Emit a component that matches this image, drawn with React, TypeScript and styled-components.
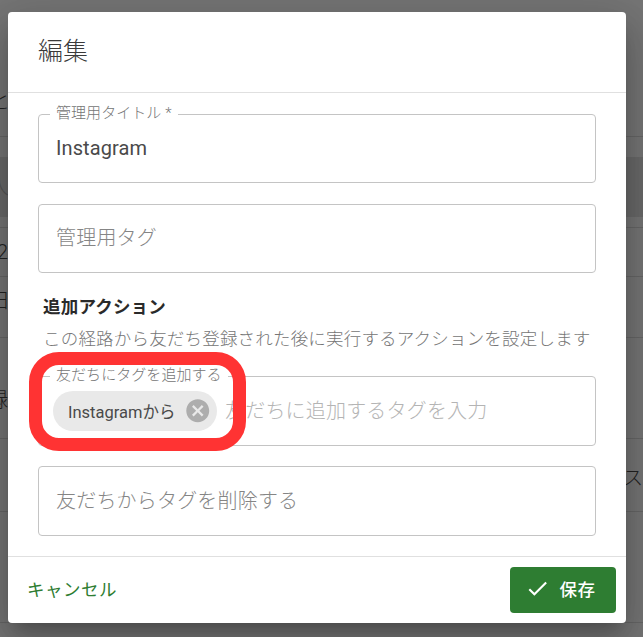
import styled, { createGlobalStyle } from 'styled-components';

const fontStack = `Roboto, "Noto Sans CJK JP", sans-serif`;

const GlobalStyle = createGlobalStyle`
  html, body {
    margin: 0;
    padding: 0;
    background: #757575;
  }
  body {
    font-family: ${fontStack};
    overflow: hidden;
  }
`;

const Page = styled.div`
  position: relative;
  width: 643px;
  height: 637px;
  overflow: hidden;
  background: #757575;
`;

const Backdrop = styled.div`
  display: flex;
  flex-direction: column;
  padding-top: 88px;
`;

const BackdropRow = styled.div<{ $h: number; $dark?: boolean; $noLine?: boolean }>`
  height: ${(p) => p.$h}px;
  box-sizing: border-box;
  border-bottom: ${(p) => (p.$noLine ? 'none' : '1px solid #666')};
  background: ${(p) => (p.$dark ? '#696969' : 'transparent')};
  display: flex;
  justify-content: space-between;
  align-items: center;
  font-size: 20px;
  color: #222;
`;

const BackdropText = styled.span<{ $shift?: number; $dy?: number; $faded?: boolean }>`
  margin-left: ${(p) => p.$shift ?? 0}px;
  margin-top: ${(p) => (p.$dy ?? 0) * 2}px;
  color: ${(p) => (p.$faded ? '#555' : '#222')};
  font-weight: 300;
`;

const Dialog = styled.div`
  position: absolute;
  left: 8px;
  top: 12px;
  width: 618px;
  height: 611px;
  background: #fff;
  border-radius: 4px;
  display: flex;
  flex-direction: column;
  box-shadow: 0 11px 15px -7px rgba(0, 0, 0, 0.2), 0 24px 38px 3px rgba(0, 0, 0, 0.14), 0 9px 46px 8px rgba(0, 0, 0, 0.12);
`;

const Title = styled.h2`
  margin: 0;
  height: 81px;
  box-sizing: border-box;
  padding: 24px 30px 0;
  font-size: 25px;
  line-height: 32px;
  font-weight: 300;
  color: #3a3a3a;
  border-bottom: 1px solid #e0e0e0;
  flex: none;
`;

const Body = styled.div`
  flex: 1;
  padding: 21px 30px 0;
  display: flex;
  flex-direction: column;
`;

const Field = styled.div<{ $h?: number; $mb?: number }>`
  position: relative;
  box-sizing: border-box;
  height: ${(p) => p.$h ?? 69}px;
  margin-bottom: ${(p) => p.$mb ?? 21}px;
  border: 1px solid #c4c4c4;
  border-radius: 4px;
  display: flex;
  align-items: center;
  padding: 0 17px;
  font-size: 20px;
  letter-spacing: 0.19px;
`;

const FloatLabel = styled.span`
  position: absolute;
  left: 11px;
  top: -11px;
  padding: 0 6px;
  background: #fff;
  font-size: 15px;
  line-height: 18px;
  letter-spacing: 0.06px;
  font-weight: 300;
  color: #757575;
  white-space: nowrap;
`;

const Value = styled.span`
  margin-bottom: 2px;
  color: #4a4a4a;
  letter-spacing: 0.1px;
`;

const Placeholder = styled.span<{ $light?: boolean }>`
  margin-bottom: 4px;
  color: ${(p) => (p.$light ? '#b4b4b4' : '#858585')};
  font-weight: 300;
  white-space: nowrap;
`;

const SectionTitle = styled.div`
  margin: 2px 0 0 5px;
  font-size: 17.5px;
  line-height: 22px;
  letter-spacing: 0.19px;
  font-weight: 700;
  color: #2a2a2a;
`;

const SectionHint = styled.div`
  margin: 10px 0 26px 5px;
  font-size: 17.5px;
  line-height: 22px;
  letter-spacing: 0.19px;
  font-weight: 300;
  color: #757575;
  white-space: nowrap;
`;

const TagChip = styled.span`
  display: inline-flex;
  align-items: center;
  justify-content: space-between;
  box-sizing: border-box;
  width: 164px;
  height: 40px;
  margin: 0 8px 0 -3px;
  padding: 0 6px 0 15px;
  border-radius: 20px;
  background: #e9e9e9;
  font-size: 16.5px;
  letter-spacing: 0;
  color: #4a4a4a;
  flex: none;
  white-space: nowrap;
`;

const Footer = styled.div`
  flex: none;
  height: 67px;
  box-sizing: border-box;
  border-top: 1px solid #e0e0e0;
  padding: 0 10px 0 19px;
  display: flex;
  align-items: center;
  justify-content: space-between;
`;

const CancelButton = styled.button`
  border: 0;
  background: transparent;
  padding: 0 0 4px;
  font: inherit;
  font-size: 17.5px;
  letter-spacing: 0.5px;
  color: #2e7d32;
`;

const SaveButton = styled.button`
  width: 106px;
  height: 46px;
  border: 0;
  border-radius: 4px;
  padding: 0 6px 3px 0;
  background: #2e7d32;
  color: #fff;
  font: inherit;
  font-size: 17.5px;
  letter-spacing: 0.5px;
  font-weight: 500;
  display: flex;
  align-items: center;
  justify-content: center;
  gap: 10px;
`;

// red highlight drawn on top of the screenshot
const Highlight = styled.div`
  position: absolute;
  left: 29px;
  top: 352px;
  width: 217px;
  height: 99px;
  box-sizing: border-box;
  border: 13px solid #ff3333;
  border-radius: 30px;
`;

export default function App() {
  return (
    <Page>
      <GlobalStyle />
      <Backdrop>
        <BackdropRow $h={49}><BackdropText $shift={-10} $dy={-12}>と</BackdropText></BackdropRow>
        <BackdropRow $h={20} $noLine />
        <BackdropRow $h={60} $dark $noLine><BackdropText $shift={-11} $dy={-2} $faded>入</BackdropText></BackdropRow>
        <BackdropRow $h={11} />
        <BackdropRow $h={49}><BackdropText $shift={-3}>2</BackdropText></BackdropRow>
        <BackdropRow $h={61}><BackdropText $shift={-10} $dy={-8}>日</BackdropText></BackdropRow>
        <BackdropRow $h={101}><BackdropText $shift={-12} $dy={10}>録</BackdropText></BackdropRow>
        <BackdropRow $h={73}><span />&nbsp;<BackdropText $dy={1}>ス</BackdropText></BackdropRow>
        <BackdropRow $h={111} />
      </Backdrop>
      <Dialog>
        <Title>編集</Title>
        <Body>
          <Field>
            <FloatLabel>管理用タイトル *</FloatLabel>
            <Value>Instagram</Value>
          </Field>
          <Field>
            <Placeholder>管理用タグ</Placeholder>
          </Field>
          <SectionTitle>追加アクション</SectionTitle>
          <SectionHint>この経路から友だち登録された後に実行するアクションを設定します</SectionHint>
          <Field $h={70} $mb={20}>
            <FloatLabel>友だちにタグを追加する</FloatLabel>
            <TagChip>
              Instagramから
              <svg width="27.5" height="27.5" viewBox="0 0 24 24" fill="#adadad">
                <path d="M12 2C6.47 2 2 6.47 2 12s4.47 10 10 10 10-4.47 10-10S17.53 2 12 2zm5 13.59L15.59 17 12 13.41 8.41 17 7 15.59 10.59 12 7 8.41 8.41 7 12 10.59 15.59 7 17 8.41 13.41 12 17 15.59z" />
              </svg>
            </TagChip>
            <Placeholder $light>友だちに追加するタグを入力</Placeholder>
          </Field>
          <Field $h={70} $mb={0}>
            <Placeholder>友だちからタグを削除する</Placeholder>
          </Field>
        </Body>
        <Footer>
          <CancelButton>キャンセル</CancelButton>
          <SaveButton>
            <svg width="25" height="25" viewBox="0 0 24 24" fill="#fff">
              <path d="M9 16.17L4.83 12l-1.42 1.41L9 19 21 7l-1.41-1.41z" />
            </svg>
            保存
          </SaveButton>
        </Footer>
      </Dialog>
      <Highlight />
    </Page>
  );
}
